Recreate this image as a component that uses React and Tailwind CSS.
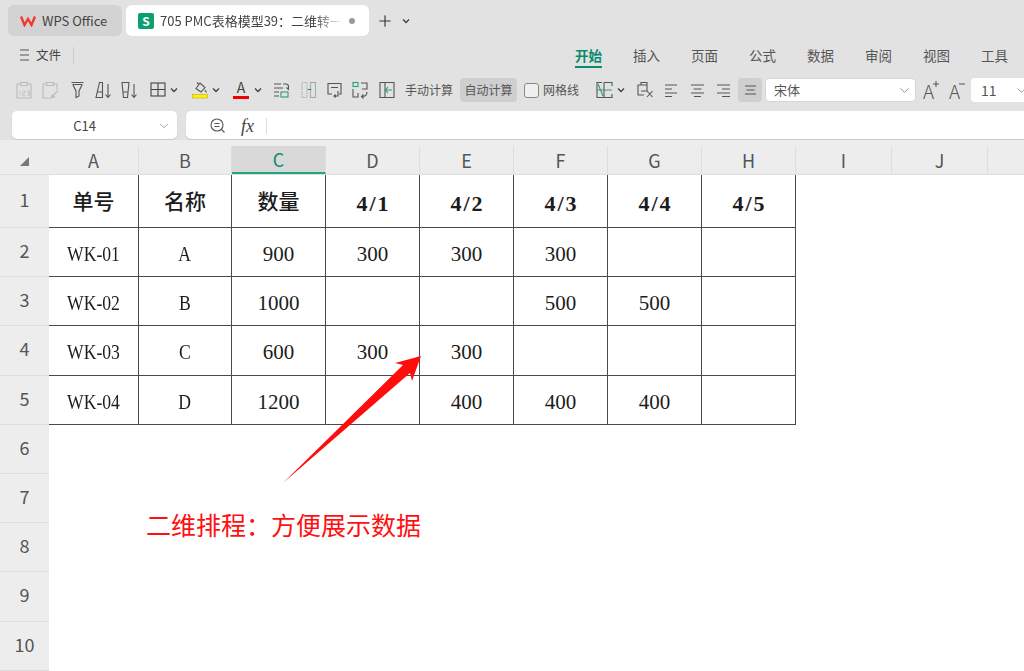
import React from 'react'
import { ChevronDown, Plus } from 'lucide-react'

const sans = { fontFamily: '"Noto Sans CJK SC", "Noto Sans", sans-serif' }
const sheetFont = { fontFamily: '"Liberation Serif", "Noto Sans CJK SC", serif' }

const columns = [
  { name: 'A', w: 'w-[90px]' },
  { name: 'B', w: 'w-[93px]' },
  { name: 'C', w: 'w-[94px]' },
  { name: 'D', w: 'w-[94px]' },
  { name: 'E', w: 'w-[94px]' },
  { name: 'F', w: 'w-[94px]' },
  { name: 'G', w: 'w-[94px]' },
  { name: 'H', w: 'w-[94px]' },
  { name: 'I', w: 'w-[96px]' },
  { name: 'J', w: 'w-[96px]' },
]

const rows = [
  ['单号', '名称', '数量', '4/1', '4/2', '4/3', '4/4', '4/5'],
  ['WK-01', 'A', '900', '300', '300', '300', '', ''],
  ['WK-02', 'B', '1000', '', '', '500', '500', ''],
  ['WK-03', 'C', '600', '300', '300', '', '', ''],
  ['WK-04', 'D', '1200', '', '400', '400', '400', ''],
]

const rowHeights = ['h-[53px]', 'h-[49px]', 'h-[49px]', 'h-[50px]', 'h-[49px]', 'h-[49px]', 'h-[49px]', 'h-[49px]', 'h-[50px]', 'h-[49px]']
const ribbonTabs = ['插入', '页面', '公式', '数据', '审阅', '视图', '工具']

const cellClass = (r, c) => {
  if (r > 0) return 'pt-[5px] text-[21px]'
  if (c < 3) return 'pt-[4px] text-[21px] font-medium'
  return 'pt-[4px] pl-[2px] text-[22px] font-bold tracking-[2px]'
}

const Icon = ({ children, w = 18, className = '' }) => (
  <svg width={w} height="18" viewBox={`0 0 ${w} 18`} fill="none" stroke="#555" strokeWidth="1.1" className={`shrink-0 ${className}`}>
    {children}
  </svg>
)

const Caret = ({ className = '' }) => (
  <svg width="8" height="6" viewBox="0 0 8 6" fill="none" stroke="#444" strokeWidth="1.4" className={`shrink-0 ${className}`}>
    <path d="M1 1.5 4 4.5 7 1.5" />
  </svg>
)

const Toolbar = () => (
  <div className="flex h-[34px] items-center pl-[16px] text-[12px] text-[#555]">
    <Icon w={16}>
      <g stroke="#bbb">
        <path d="M4 3H1v14h14V3h-3M4.500 1.500h7v3h-7z" />
        <path d="M4 9.500v5M6.500 10H9v2H6.500v2.500H9M11 10h2.500v4.500H11M11 12h2.500" strokeWidth=".7" />
      </g>
    </Icon>
    <Icon w={16} className="ml-[10px]">
      <g stroke="#bbb">
        <path d="M4 3H1v14h6M12 3h3v6M4.500 1.500h7v3h-7z" />
        <path d="M9.500 16l6-6M8.500 17l2-3 2 2z" />
      </g>
    </Icon>
    <Icon w={13} className="ml-[13px]">
      <path d="M.5 1.500h12M1.500 3.500h10M2 4l3 6v6.500l3-1.500v-5l3-6" />
    </Icon>
    <Icon w={17} className="ml-[11px]">
      <path d="M4.500 1.500h3v15H1zM2.500 11h5M13 3v13M10.500 13.500l2.500 3 2.500-3" />
    </Icon>
    <Icon w={17} className="ml-[9px]">
      <path d="M1 1.500h7l-1.500 15h-4zM2 11h5M13 3v13M10.500 13.500l2.500 3 2.500-3" />
    </Icon>
    <Icon w={16} className="ml-[12px]">
      <rect x="1" y="2" width="14" height="13" stroke="#444" />
      <path d="M8 2v13M1 8.500h14" stroke="#444" />
    </Icon>
    <Caret className="ml-[4px]" />
    <svg width="16" height="18" viewBox="0 0 16 18" fill="none" stroke="#555" strokeWidth="1.1" className="ml-[14px] shrink-0">
      <path d="M8 2l5 4.500-4 4.500-5-3.500zM5 1.500l2 2M13 9l1.500 2.500" />
      <rect x="0.500" y="13.500" width="15" height="3.500" fill="#fef200" stroke="#b9ae2a" strokeWidth=".6" />
    </svg>
    <Caret className="ml-[4px]" />
    <div className="ml-[13px] flex w-[16px] shrink-0 flex-col items-center">
      <span className="h-[13px] text-[14px] leading-[13px] text-[#444]" style={sans}>A</span>
      <span className="mt-[2px] h-[3px] w-[16px] bg-[#f00000]" />
    </div>
    <Caret className="ml-[5px]" />
    <Icon w={16} className="ml-[11px]">
      <path d="M1 3h7M1 7h9M1 11h5M1 15h5M10 3h3c2 0 2.500 1 2.500 2.500V8M13.500 6.500l2 2 1-1.500" />
      <rect x="8" y="11" width="7" height="5" stroke="#2a9d78" />
    </Icon>
    <Icon w={15} className="ml-[12px]">
      <g stroke="#aaa">
        <rect x="1" y="1.500" width="5" height="15" strokeDasharray="1.500 1" />
        <rect x="9.500" y="1.500" width="5" height="15" />
        <path d="M6.500 8.500h4" stroke="#2a9d78" />
      </g>
    </Icon>
    <Icon w={15} className="ml-[11px]">
      <path d="M5 13H1V2.500h13V13h-2M4 6.500h7M11 10v5H7M8.500 13.500 7 15l1.500 1.500" />
    </Icon>
    <Icon w={16} className="ml-[10px]">
      <rect x="1" y="1.500" width="5" height="4" stroke="#2a9d78" />
      <path d="M1 8v8h5v-4M9 2h6v6h-5M15 11c0 2.500-1.500 4.500-5 4.500M11.500 13.500l-2 2 2 2" />
    </Icon>
    <Icon w={16} className="ml-[11px]">
      <path d="M6 1.500H1v15h5M6 1.500h9v15H6z" />
      <path d="M13 9H6.500M9 6 6.500 9 9 12" stroke="#2a9d78" />
    </Icon>
    <span className="ml-[10px] w-[50px] shrink-0 whitespace-nowrap" style={sans}>手动计算</span>
    <span className="ml-[5px] flex h-[24px] w-[57px] shrink-0 items-center justify-center whitespace-nowrap rounded-[4px] bg-[#cfcfcf]" style={sans}>自动计算</span>
    <span className="ml-[7px] h-[15px] w-[15px] shrink-0 rounded-[3px] border border-[#888] bg-[#f0f0f0]" />
    <span className="ml-[4px] w-[36px] shrink-0 whitespace-nowrap" style={sans}>网格线</span>
    <Icon w={17} className="ml-[17px]">
      <path d="M6 1.500H1v15h15V13M16 5V1.500H8M8 1.500v15" />
      <path d="M1 9h15M2 3l5 12" stroke="#2a9d78" />
    </Icon>
    <Caret className="ml-[4px]" />
    <Icon w={16} className="ml-[12px]">
      <path d="M7 4h3V1.500H4V4H1v10h6M4 4h6v6H4M10 10l5.500 6M15.500 10 10 16" />
    </Icon>
    <Icon w={14} className="ml-[11px]"><path d="M1 4h12M1 8h7M1 12h12M1 15.500h7" /></Icon>
    <Icon w={15} className="ml-[12px]"><path d="M1 4h13M3.500 8h8M1 12h13M4 15.500h7" /></Icon>
    <Icon w={15} className="ml-[11px]"><path d="M1 4h13M6 8h8M1 12h13M6 15.500h8" /></Icon>
    <div className="ml-[7px] flex h-[24px] w-[24px] shrink-0 items-center justify-center rounded-[4px] bg-[#cfcfcf]">
      <Icon w={13}><path d="M1 5h11M2.500 9h8M1 13h11" /></Icon>
    </div>
    <div className="ml-[3px] flex h-[24px] w-[151px] shrink-0 items-center justify-between rounded-[4px] border border-[#d5d5d5] bg-white pl-[8px] pr-[3px] text-[13px]" style={sans}>
      <span>宋体</span>
      <ChevronDown size={15} strokeWidth={1.2} color="#777" />
    </div>
    <div className="ml-[7px] flex w-[17px] shrink-0 items-start">
      <span className="text-[19px] font-light leading-none" style={sans}>A</span>
      <svg width="6" height="6" viewBox="0 0 6 6" fill="none" stroke="#555" className="-ml-[1px] shrink-0"><path d="M3 0v6M0 3h6" /></svg>
    </div>
    <div className="ml-[9px] flex w-[17px] shrink-0 items-start">
      <span className="text-[19px] font-light leading-none" style={sans}>A</span>
      <svg width="6" height="6" viewBox="0 0 6 6" fill="none" stroke="#555" className="-ml-[1px] shrink-0"><path d="M0 3h6" /></svg>
    </div>
    <div className="ml-[5px] flex h-[24px] w-[60px] shrink-0 items-center justify-between rounded-[4px] bg-white pl-[10px] pr-[2px] text-[14px]" style={sans}>
      <span>11</span>
      <ChevronDown size={15} strokeWidth={1.2} color="#777" />
    </div>
  </div>
)

const App = () => {
  return (
    <div className="flex h-[671px] w-[1024px] flex-col overflow-hidden bg-white">
      <div className="h-[140px] shrink-0 bg-[#e2e2e2]">
        <div className="flex h-[36px] items-end pl-[8px]">
          <div className="flex h-[31px] w-[114px] items-center gap-[6px] rounded-[6px] bg-[#d3d3d3] pl-[12px] text-[13px] text-[#444]" style={sans}>
            <svg width="16" height="12" viewBox="0 0 16 12" fill="none" stroke="#ec3b33" strokeWidth="2.400">
              <path d="M1 1.500 4.500 10 8 4l3.500 6L15 1.500" />
            </svg>
            <span>WPS Office</span>
          </div>
          <div className="ml-[4px] flex h-[31px] w-[243px] items-center rounded-[6px] bg-white pl-[12px] text-[13px] text-[#444]" style={sans}>
            <span className="flex h-[16px] w-[16px] shrink-0 items-center justify-center rounded-[2px] bg-[#0e9f6e] text-[12px] font-bold leading-none text-white">S</span>
            <span className="ml-[6px] w-[182px] overflow-hidden whitespace-nowrap [mask-image:linear-gradient(to_right,black_85%,transparent)]">705 PMC表格模型39：二维转一维</span>
            <span className="ml-[7px] h-[6px] w-[6px] rounded-full bg-[#999]" />
          </div>
          <div className="ml-[7px] flex h-[31px] items-center gap-[8px]">
            <Plus size={18} strokeWidth={1.5} color="#333" />
            <Caret />
          </div>
        </div>
        <div className="flex h-[37px] items-center pl-[20px] pr-[16px] pt-[1px]">
          <svg width="9" height="12" viewBox="0 0 9 12" fill="none" stroke="#555" strokeWidth="1.100">
            <path d="M0 1h9M0 6h9M0 11h9" />
          </svg>
          <span className="ml-[7px] text-[12.500px] text-[#444]" style={sans}>文件</span>
          <span className="ml-[12px] h-[17px] w-px bg-[#cccccc]" />
          <div className="ml-auto flex items-center gap-[31px] text-[13.500px] text-[#555]" style={sans}>
            <span className="relative font-bold text-[#0b8a70]">
              开始
              <span className="absolute -bottom-[3px] left-0 h-[2px] w-full bg-[#0b8a70]" />
            </span>
            {ribbonTabs.map((tab) => (
              <span key={tab}>{tab}</span>
            ))}
          </div>
        </div>
        <Toolbar />
        <div className="flex h-[33px] items-start pl-[12px] pt-[4px]">
          <div className="flex h-[28px] w-[165px] items-center rounded-[5px] bg-white pr-[6px] pt-[2px] shadow-[0_1px_1px_#c4c4c4]">
            <span className="flex-1 text-center text-[13px] text-[#444]" style={sans}>C14</span>
            <ChevronDown size={14} strokeWidth={1.2} color="#777" />
          </div>
          <div className="ml-[9px] flex h-[28px] flex-1 items-center rounded-l-[5px] bg-white pl-[24px] pt-[2px] shadow-[0_1px_1px_#c4c4c4]">
            <svg width="16" height="16" viewBox="0 0 16 16" fill="none" stroke="#555" strokeWidth="1.100">
              <circle cx="7" cy="7" r="6" />
              <path d="M4.500 5.500h5M4.500 8.500h5M11.500 11.500l3 3" />
            </svg>
            <span className="ml-[15px] text-[18px] italic leading-none text-[#444]" style={{ fontFamily: '"Liberation Serif", serif' }}>fx</span>
            <span className="ml-[12px] h-[16px] w-px bg-[#dddddd]" />
          </div>
        </div>
      </div>

      <div className="flex h-[35px] shrink-0 border-b border-[#dedede] bg-[#ededed] pt-[6px]" style={sans}>
        <div className="flex w-[49px] shrink-0 items-center justify-center pt-[2px]">
          <svg width="9" height="9" viewBox="0 0 9 9"><path d="M9 0v9H0z" fill="#777" /></svg>
        </div>
        {columns.map((col) => (
          <div
            key={col.name}
            className={`${col.w} flex shrink-0 items-center justify-center border-r border-[#dedede] text-[18px] ${col.name === 'C' ? 'border-b-2 border-b-[#1fa783] bg-[#d9d9d9] text-[#0b8a70]' : 'text-[#555]'}`}
          >
            {col.name}
          </div>
        ))}
      </div>

      <div className="flex min-h-0 flex-1">
        <div className="w-[49px] shrink-0 bg-[#ededed]" style={sans}>
          {rowHeights.map((h, i) => (
            <div key={i} className={`${h} flex items-center justify-center border-b border-[#dedede] pb-[4px] text-[18px] text-[#555]`}>
              {i + 1}
            </div>
          ))}
        </div>
        <div className="relative min-w-0 flex-1">
          <div className="flex flex-col">
            {rows.map((row, r) => (
              <div key={r} className={`${rowHeights[r]} flex`}>
                {row.map((cell, c) => (
                  <div
                    key={c}
                    className={`${columns[c].w} flex shrink-0 items-center justify-center border-b border-r border-[#4a4a4a] text-[#1c1c1c] ${cellClass(r, c)}`}
                    style={sheetFont}
                  >
                    <span className={/[A-Z]/.test(cell) ? 'inline-block scale-x-[0.84] whitespace-nowrap' : 'whitespace-nowrap'}>{cell}</span>
                  </div>
                ))}
              </div>
            ))}
          </div>
          {/* arrow and note sit on top of the sheet */}
          <svg className="absolute left-[230px] top-[170px]" width="145" height="140" viewBox="0 0 145 140">
            <path d="M4 138 124 20 116 18 142 11 133 36 131 28Z" fill="#ff0d0d" />
          </svg>
          <span className="absolute left-[97px] top-[332px] whitespace-nowrap text-[25px] leading-[34px] text-[#ff1010]" style={sans}>二维排程：方便展示数据</span>
        </div>
      </div>
    </div>
  )
}

export default App
